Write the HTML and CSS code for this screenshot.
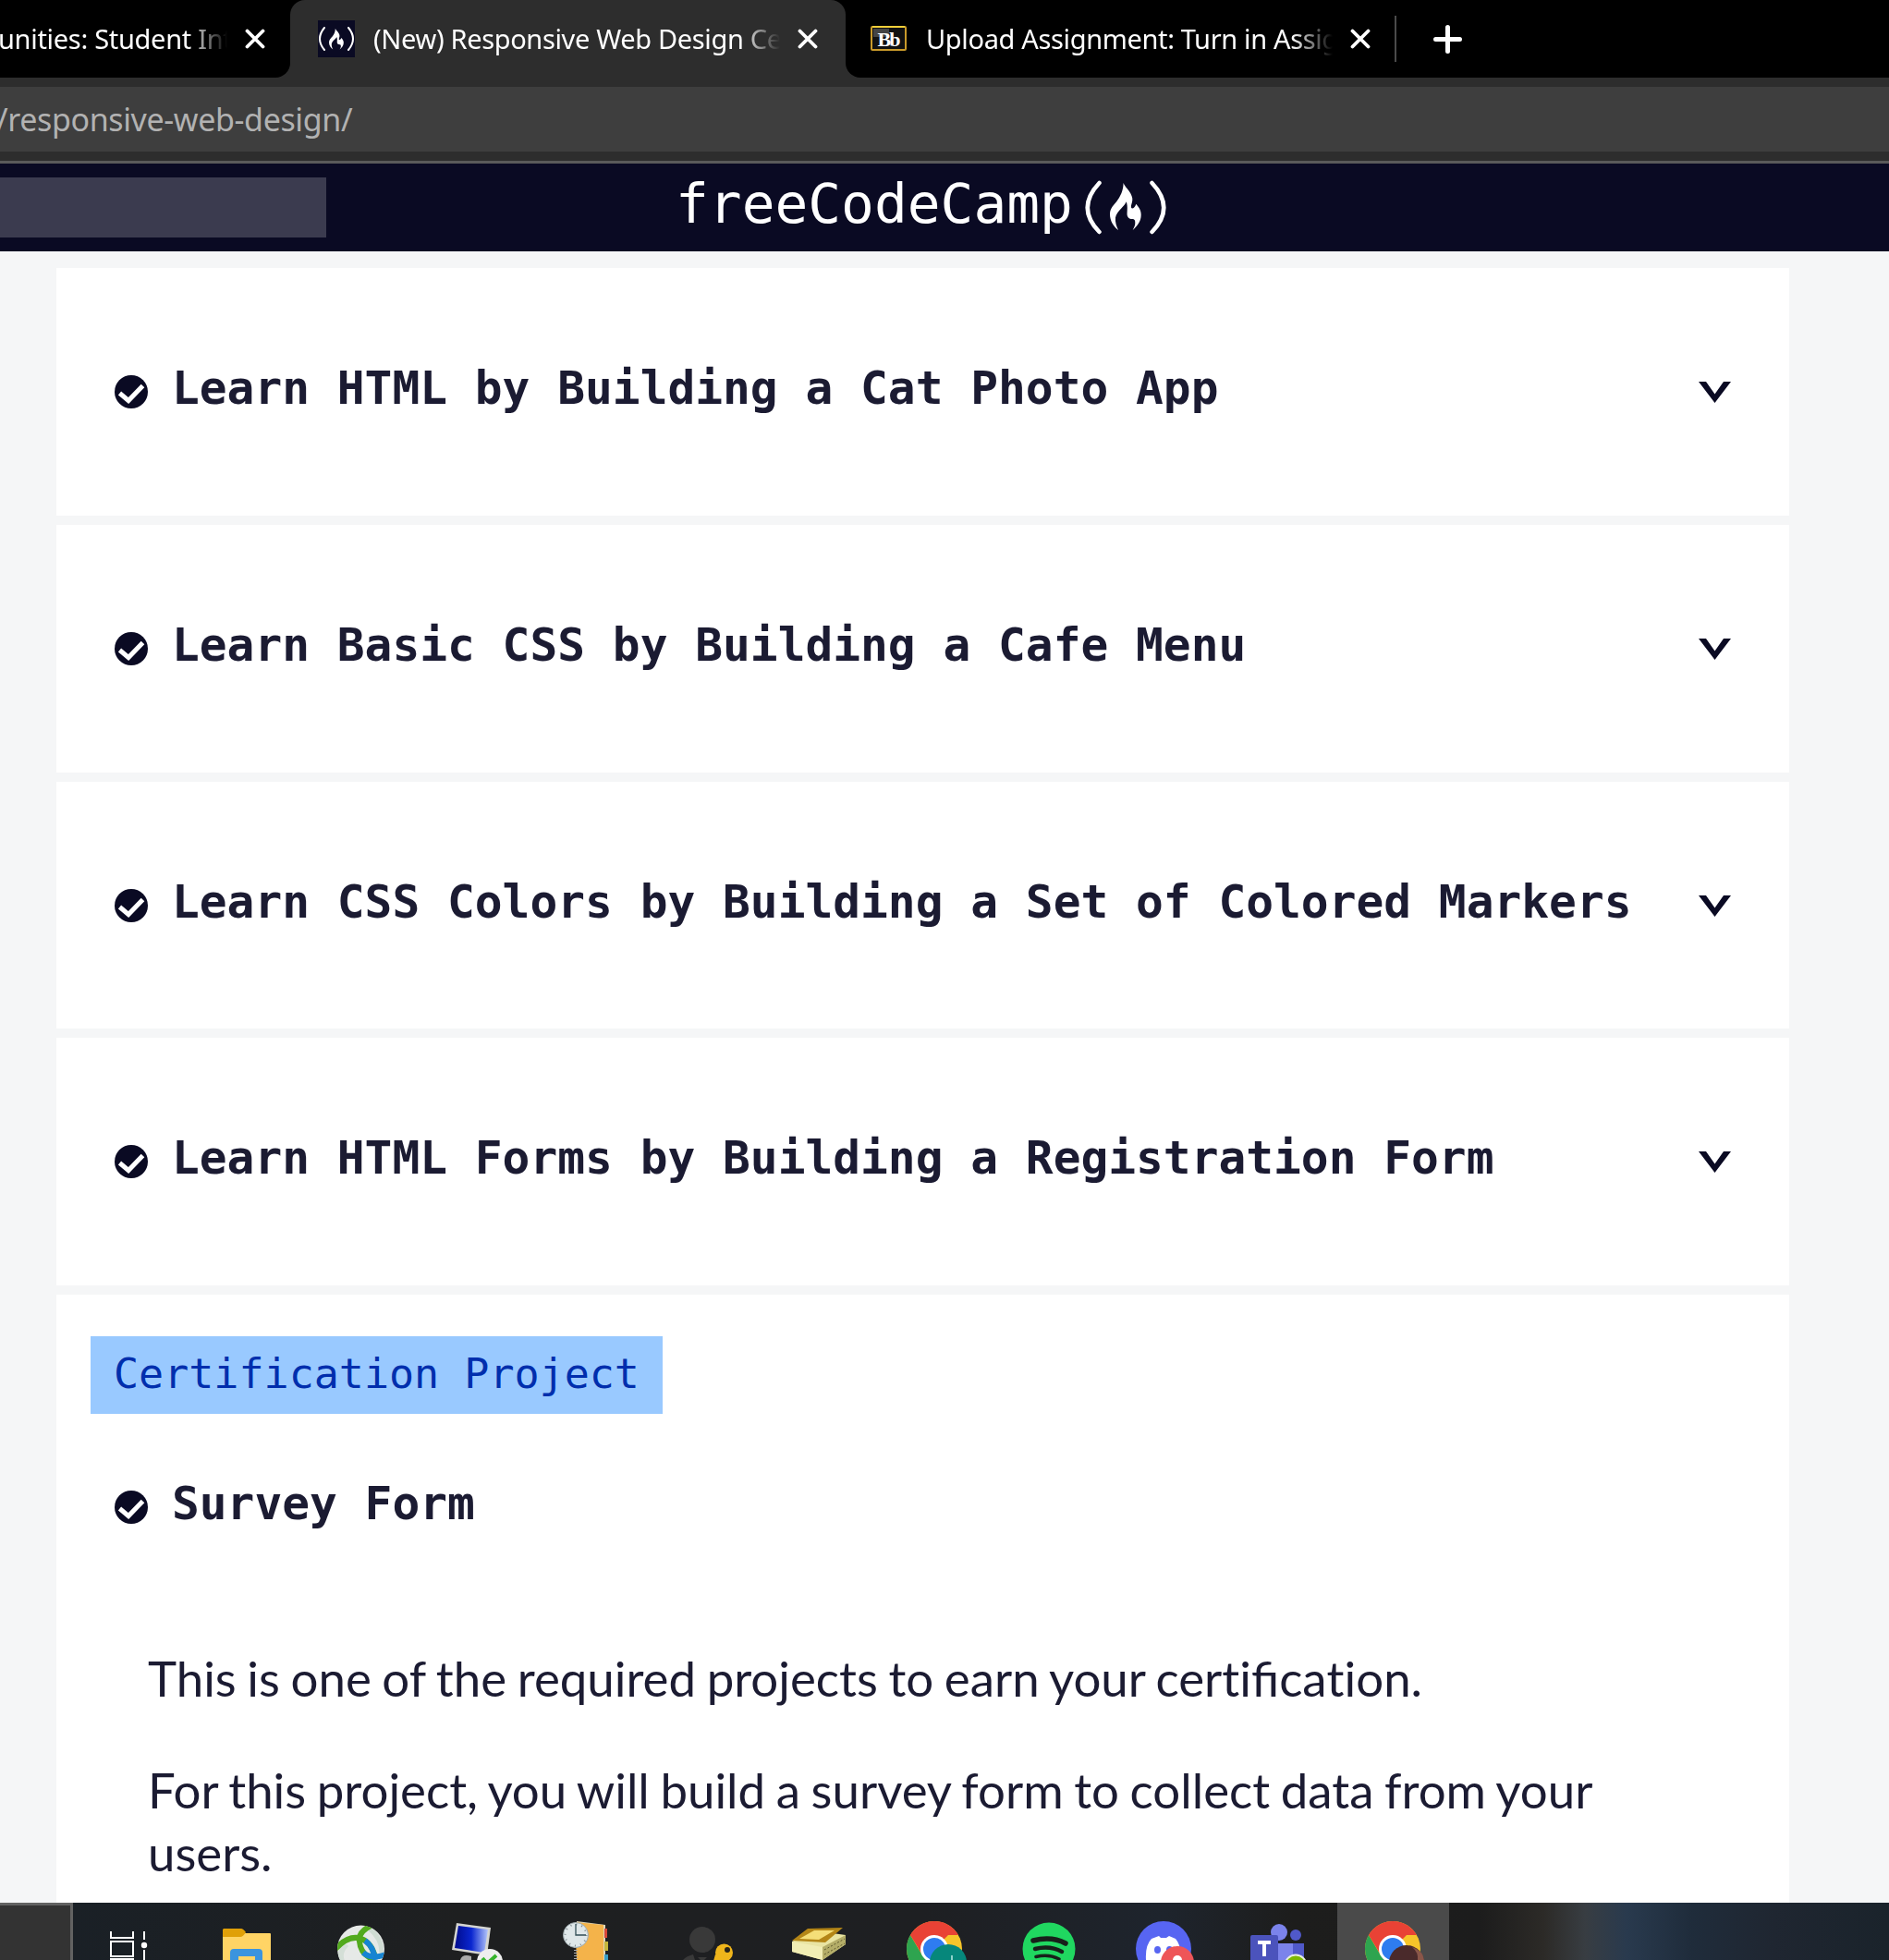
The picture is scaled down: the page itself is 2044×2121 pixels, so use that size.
FILE: index.html
```html
<!DOCTYPE html>
<html lang="en">
<head>
<meta charset="utf-8">
<title>(New) Responsive Web Design Certification</title>
<link rel="stylesheet" href="styles.css">
</head>
<body>
<svg width="0" height="0" class="defs">
  <defs>
    <path id="flame" d="M14.500 0C17 5 19 6 20.700 8.700C23 12 24.800 16 24.300 18.700C24 22 22.500 24 23 26.500C23.500 28.500 27 27.500 28.300 22.700C31 26 33.700 29 33.700 34.500C33.700 42 29 47 24.700 51C26 48 27.500 46 27.300 43C27.300 40 26.500 39 24.500 39C22 39 20 38.500 19 36C17.800 33 20 26 17.700 20.300C16 24 14 25.500 12.300 27.500C9 31 6.500 34 6 37.500C5.500 42 7 47 9 51C4 47 0 41 0 34C0 27 4 24.500 7.300 20C11 15 14.800 8 14.500 0Z"/>
    <symbol id="check" viewBox="0 0 36 36"><circle cx="18" cy="18" r="18" fill="#0a0a23"/><path d="M5.500 19.500 15 27.500 30.500 11.500" fill="none" stroke="#fff" stroke-width="5"/></symbol>
    <symbol id="arrow" viewBox="0 0 35 23"><path d="M0 0H8L17.500 13.500 27 0H35L17.500 23Z" fill="#0a0a23"/></symbol>
    <symbol id="close" viewBox="0 0 22 22"><path d="M2.500 2.500 19.500 19.500M19.500 2.500 2.500 19.500" stroke="#fff" stroke-width="3.800" stroke-linecap="round"/></symbol>
  </defs>
</svg>

<div class="tabs">
  <div class="tab tab-first">
    <span class="tab-title">unities: Student Int</span>
    <svg class="close"><use href="#close"/></svg>
  </div>
  <div class="tab tab-active">
    <svg class="favicon" viewBox="0 0 40 40"><path fill="#0a0a23" d="M0 0H40V40H0z"/><g fill="none" stroke="#fff" stroke-width="2" stroke-linecap="round"><path d="M7 8Q-3 20 7 32M33 8Q43 20 33 32"/></g><use href="#flame" fill="#fff" transform="translate(12 9) scale(.47 .44)"/></svg>
    <span class="tab-title">(New) Responsive Web Design Ce</span>
    <svg class="close"><use href="#close"/></svg>
  </div>
  <div class="tab tab-last">
    <svg class="favicon" viewBox="0 0 40 40"><rect x="1" y="7" width="37" height="25" rx="1" fill="#111" stroke="#c99a2a" stroke-width="2"/><path d="M2 7H37" stroke="#f3cf3a" stroke-width="2"/><path d="M3 9H20V18H3z" fill="#444"/><text x="19" y="27.500" class="bb">Bb</text></svg>
    <span class="tab-title">Upload Assignment: Turn in Assig</span>
    <svg class="close"><use href="#close"/></svg>
  </div>
  <div class="tab-divider"></div>
  <svg class="plus" viewBox="0 0 31 31"><path d="M15.500 2.500V28.500M2.500 15.500H28.500" stroke="#fff" stroke-width="5" stroke-linecap="round"/></svg>
</div>
<div class="toolbar"><div class="address">/responsive-web-design/</div></div>

<header class="site-header">
  <div class="search"></div>
  <div class="logo">
    <span class="logo-text">freeCodeCamp</span>
    <svg class="logo-mark" viewBox="0 0 88 60"><g fill="none" stroke="#fff" stroke-width="4.500" stroke-linecap="round"><path d="M15.500 3Q-10 30 15.500 56M72.500 3Q98 30 72.500 56"/></g><use href="#flame" fill="#fff" x="27" y="3"/></svg>
  </div>
</header>

<main class="content">
  <section class="card"><h3><svg class="check"><use href="#check"/></svg>Learn HTML by Building a Cat Photo App</h3><svg class="arrow"><use href="#arrow"/></svg></section>
  <section class="card"><h3><svg class="check"><use href="#check"/></svg>Learn Basic CSS by Building a Cafe Menu</h3><svg class="arrow"><use href="#arrow"/></svg></section>
  <section class="card"><h3><svg class="check"><use href="#check"/></svg>Learn CSS Colors by Building a Set of Colored Markers</h3><svg class="arrow"><use href="#arrow"/></svg></section>
  <section class="card"><h3><svg class="check"><use href="#check"/></svg>Learn HTML Forms by Building a Registration Form</h3><svg class="arrow"><use href="#arrow"/></svg></section>
  <section class="card project">
    <span class="badge">Certification Project</span>
    <h3><svg class="check"><use href="#check"/></svg>Survey Form</h3>
    <p>This is one of the required projects to earn your cer<span class="no-liga">t</span>ifica<span class="no-liga">t</span>ion.</p>
    <p>For this project, you will build a survey form to collect data from your users.</p>
  </section>
</main>

<footer class="taskbar">
  <div class="task-search"></div>
  <svg class="task" viewBox="79 0 124 62"><g fill="none" stroke="#fff" stroke-width="2"><path d="M120 31V38H144V31M120 42H144V58H120zM119 61H145M156 31V40M156 51V62"/></g><circle cx="156" cy="46" r="3.200" fill="#fff"/></svg>
  <svg class="task" viewBox="203 0 124 62"><path d="M241 33H292a1 1 0 0 1 1 1V62H241z" fill="#ffd465"/><path d="M242 28H261Q263 28 266 32Q263 37 260 37H241V29z" fill="#e0a008"/><path d="M249 62V54Q249 50 253 50H280Q284 50 284 54V62H276V58H258V62z" fill="#3b94de"/></svg>
  <svg class="task" viewBox="327 0 124 62"><defs><clipPath id="globe"><circle cx="390.500" cy="50" r="25.500"/></clipPath></defs><circle cx="390.500" cy="50" r="25.500" fill="#e6e9e7"/><g clip-path="url(#globe)" fill="none"><path d="M400 28Q416 42 412 58" stroke="#cfdcd3" stroke-width="5"/><path d="M370 63Q366 54 375 45" stroke="#d4dfd7" stroke-width="6"/><path d="M362 51Q377 34 391 39Q402 43 406 59" stroke="#52aa1d" stroke-width="6"/><path d="M401 25Q387 32 389 42Q390 56 405 62" stroke="#52aa1d" stroke-width="6"/><path d="M395 41Q404 47 406 62M393 54Q402 62 418 56" stroke="#1684d2" stroke-width="6"/></g></svg>
  <svg class="task" viewBox="451 0 124 62"><defs><linearGradient id="screen"><stop offset="0" stop-color="#000b8c"/><stop offset=".5" stop-color="#0a26d0"/><stop offset="1" stop-color="#b4c6fa"/></linearGradient></defs><path d="M494 22 531 27 527 57 489 51z" fill="#d5d5d1"/><path d="M496 25 528 29 524 54 492 49z" fill="url(#screen)"/><path d="M498 62Q500 55 510 58V62z" fill="#aaa"/><circle cx="530" cy="64" r="14" fill="#eee"/><path d="M522 60 527 66 537 57" fill="none" stroke="#36b42c" stroke-width="4"/></svg>
  <svg class="task" viewBox="575 0 124 62"><path d="M624 20 655 24V62H624z" fill="#ddd5ba"/><path d="M622 21 653 24V62H624z" fill="#f4b34a"/><path d="M654 28H657V38H654z" fill="#d74738"/><path d="M654 42H658V52H654z" fill="#c5b63c"/><path d="M654 56H658V62H654z" fill="#3a9dc5"/><path d="M623 45V62" stroke="#aaa" stroke-width="4" stroke-dasharray="1 2"/><circle cx="623" cy="35" r="13.500" fill="#dfe7e9" stroke="#9eaaae"/><circle cx="623" cy="35" r="11.500" fill="none" stroke="#7c878b" stroke-width="2" stroke-dasharray="1 5.020"/><path d="M623 23V35H634" fill="none" stroke="#334f57" stroke-width="1.300"/></svg>
  <svg class="task" viewBox="699 0 124 62"><g fill="#393939"><circle cx="760" cy="40" r="14"/><path d="M739 62Q742 58 750 56L752 62zM755 59H765L762 62H758z"/></g><circle cx="783.500" cy="54" r="9.500" fill="#efb51b"/><path d="M774 56 785 60 781 63H772z" fill="#efb51b"/><circle cx="787" cy="51" r="3" fill="#272319"/></svg>
  <svg class="task" viewBox="823 0 124 62"><path d="M857 42 880 30 915 35V45L890 62 857 53z" fill="#e9e4a2"/><path d="M857 42 890 48V62L857 53z" fill="#f1edb4"/><path d="M890 48 915 35V45L890 62z" fill="#b4ad68"/><path d="M857 41 874 28 912 27 893 43z" fill="#b48617"/><path d="M865 39 881 30 903 30 886 40z" fill="#f4de78"/><path d="M892 51 914 39M892 56 914 44" stroke="#5c562c" stroke-dasharray="2 2"/></svg>
  <svg class="task" viewBox="947 0 124 62"><g id="chrome"><circle cx="1011" cy="50" r="30" fill="#f7c52a"/><path d="M1011 50 1026 35H1037A30 30 0 0 0 985 35z" fill="#e94235"/><path d="M1011 50V80A30 30 0 0 1 985 35L998 57z" fill="#2ea44f"/><path d="M985 35H1011V50L999 58z" fill="#e94235"/><circle cx="1011" cy="50" r="15" fill="#fff"/><circle cx="1011" cy="50" r="12" fill="#2e7cf0"/></g><circle cx="1026" cy="65" r="20" fill="#06877b"/><path d="M1030 57V62" stroke="#8fd2cb" stroke-width="2"/></svg>
  <svg class="task" viewBox="1071 0 124 62"><circle cx="1135" cy="50" r="28.500" fill="#20d760"/><g fill="none" stroke="#17201a" stroke-linecap="round"><path d="M1118 41Q1138 36 1153 44" stroke-width="5.500"/><path d="M1120 50Q1136 46 1149 53" stroke-width="4.500"/><path d="M1121 58.500Q1135 55 1146 61" stroke-width="3.500"/></g></svg>
  <svg class="task" viewBox="1195 0 124 62"><circle cx="1259" cy="50" r="30" fill="#5765f2"/><path d="M1240 62Q1239 46 1246 39L1254 36 1256 38H1262L1265 36 1272 39Q1279 47 1277 62z" fill="#fff"/><ellipse cx="1252.500" cy="51" rx="3.500" ry="4" fill="#5765f2"/><ellipse cx="1265.500" cy="51" rx="3.500" ry="4" fill="#5765f2"/><circle cx="1274" cy="65" r="18" fill="#ee5558"/><circle cx="1274" cy="62" r="5" fill="#fff"/></svg>
  <svg class="task" viewBox="1319 0 124 62"><circle cx="1384" cy="32" r="9" fill="#7b83eb"/><circle cx="1402" cy="35" r="6" fill="#5059c9"/><path d="M1392 44H1411V62H1392z" fill="#5059c9"/><path d="M1371 44H1399V62H1371z" fill="#7b83eb"/><rect x="1353" y="35" width="30" height="30" rx="2" fill="#4b53bc"/><path d="M1361 43H1375M1368 43V58" stroke="#fff" stroke-width="4"/><circle cx="1402" cy="68" r="11.500" fill="#7eb900" stroke="#e8eee0" stroke-width="2"/></svg>
  <svg class="task task-current" viewBox="1447 0 121 62"><use href="#chrome" x="496"/><circle cx="1522" cy="65" r="19" fill="#4a2a2b"/><path d="M1528 48Q1540 52 1541 62H1534Q1535 54 1528 48z" fill="#8a5649"/></svg>
</footer>
</body>
</html>
```
FILE: styles.css
```css
* { box-sizing: border-box; }
body {
  margin: 0;
  width: 2044px;
  height: 2121px;
  display: flex;
  flex-direction: column;
  overflow: hidden;
  background: #f5f6f7;
  color: #1b1b32;
}
svg { display: block; flex: none; }
.defs { position: absolute; }

.tabs {
  height: 84px;
  flex: none;
  display: flex;
  align-items: center;
  background: linear-gradient(to right, #2d2d2d 1200px, #000 1200px);
  color: #fff;
  font: 29px/40px "Noto Sans", sans-serif;
}
.tab {
  height: 84px;
  display: flex;
  align-items: center;
  background: #000;
}
.tab-title {
  overflow: hidden;
  white-space: nowrap;
  letter-spacing: -0.350px;
  margin-bottom: 1px;
  -webkit-mask-image: linear-gradient(to left, transparent, #000 44px);
  mask-image: linear-gradient(to left, transparent, #000 44px);
}
.tab-first { width: 314px; border-radius: 0 0 16px 0; }
.tab-first .tab-title { width: 248px; margin-left: -2px; letter-spacing: -0.3px; }
.tab-active {
  width: 601px;
  padding-left: 30px;
  background: #2d2d2d;
  border-radius: 16px 16px 0 0;
  box-shadow: 0 -20px 0 #000;
}
.tab-active .tab-title { width: 440px; margin-left: 20px; }
.tab-last { width: 594px; padding-left: 27px; border-radius: 0 0 0 16px; }
.tab-last .tab-title { width: 440px; margin-left: 20px; }
.favicon { width: 40px; height: 40px; }
.bb { fill: #fff; font: bold 22px "Liberation Serif", serif; text-anchor: middle; letter-spacing: -2px; }
.close { width: 22px; height: 22px; margin-left: 19px; }
.tab-divider { width: 2px; height: 50px; background: #4b4b4b; }
.plus { width: 31px; height: 31px; margin-left: 40px; }

.toolbar {
  height: 93px;
  flex: none;
  padding: 10px 0;
  background: #2d2d2d;
  border-bottom: 3px solid #5a5a5a;
}
.address {
  height: 70px;
  background: #3e3e3e;
  color: #b2b2b2;
  font: 34px/70px "Noto Sans", sans-serif;
  letter-spacing: -0.380px;
  text-indent: -4px;
}

.site-header {
  height: 95px;
  flex: none;
  display: flex;
  align-items: flex-start;
  padding-top: 15px;
  background: #0a0a23;
}
.search { width: 353px; height: 65px; background: #3b3b4f; }
.logo { display: flex; margin-left: 378px; }
.logo-text {
  width: 443px;
  color: #fff;
  font: 59.500px/58px "DejaVu Sans Mono", monospace;
}
.logo-mark { width: 88px; height: 60px; margin-top: 3px; }

.content {
  flex: 1;
  min-height: 0;
  width: 1875px;
  margin: 18.330px 0 0 61px;
  display: flex;
  flex-direction: column;
  gap: 10px;
  overflow: hidden;
}
.card {
  height: 267.670px;
  flex: none;
  display: flex;
  justify-content: space-between;
  padding: 100px 63px 0;
  background: #fff;
}
h3 {
  margin: 0;
  display: flex;
  font: bold 49.500px/60px "DejaVu Sans Mono", monospace;
}
.check { width: 36px; height: 36px; margin: 16px 26px 0 0; }
.arrow { width: 35px; height: 23px; margin-top: 23px; }
.project { display: block; height: 720px; padding-top: 45px; }
.badge {
  display: block;
  width: 619px;
  height: 84px;
  margin-left: -26px;
  padding-left: 25px;
  background: #99c9ff;
  color: #002ead;
  font: 45px/82px "DejaVu Sans Mono", monospace;
}
.project h3 { margin-top: 67px; }
.project p {
  width: 1600px;
  margin: 0 0 53px 36px;
  font: 52.800px/68px Lato, sans-serif;
  word-spacing: -1.900px;
}
.project h3 + p { margin-top: 125px; }
.no-liga { font-variant-ligatures: none; }

.taskbar {
  height: 62px;
  flex: none;
  display: flex;
  background: linear-gradient(to right, #1a2026 79px, #1e1f20 500px, #1e1f22 1000px, #1e242d 1260px, #1d1d1c 1400px, #1c1c1c 1600px, #2c2a27 1670px, #383d42 1715px, #293a4e 1760px, #1f2c3b 1830px, #1f2631 1920px, #1a232b 2044px);
}
.task-search { width: 79px; height: 62px; background: #333; border: solid #626262; border-width: 3px 3px 0 0; }
.task { width: 124px; height: 62px; }
.task-current { width: 121px; margin-left: 4px; background: #4a4a4a; }
```
